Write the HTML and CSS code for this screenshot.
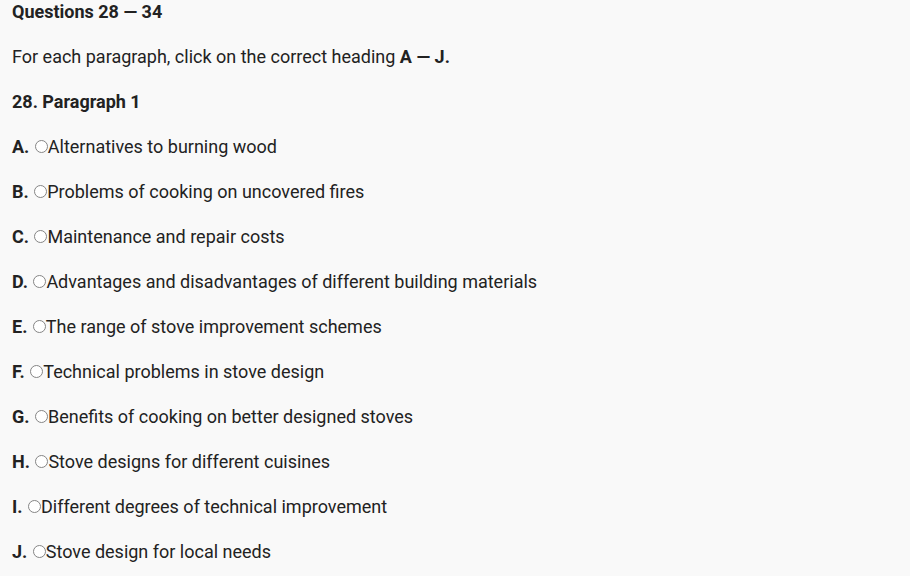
FILE: index.html
```html
<!DOCTYPE html>
<html>
<head>
<meta charset="utf-8">
<link rel="stylesheet" href="styles.css">
</head>
<body>
<div class="page">
  <p class="title">Questions 28 — 34</p>
  <p>For each paragraph, click on the correct heading <b>A — J.</b></p>
  <p class="title">28. Paragraph 1</p>
  <p class="opt"><b>A.</b> <span class="radio"></span>Alternatives to burning wood</p>
  <p class="opt"><b>B.</b> <span class="radio"></span>Problems of cooking on uncovered fires</p>
  <p class="opt"><b>C.</b> <span class="radio"></span>Maintenance and repair costs</p>
  <p class="opt"><b>D.</b> <span class="radio"></span>Advantages and disadvantages of different building materials</p>
  <p class="opt"><b>E.</b> <span class="radio"></span>The range of stove improvement schemes</p>
  <p class="opt"><b>F.</b> <span class="radio"></span>Technical problems in stove design</p>
  <p class="opt"><b>G.</b> <span class="radio"></span>Benefits of cooking on better designed stoves</p>
  <p class="opt"><b>H.</b> <span class="radio"></span>Stove designs for different cuisines</p>
  <p class="opt"><b>I.</b> <span class="radio"></span>Different degrees of technical improvement</p>
  <p class="opt"><b>J.</b> <span class="radio"></span>Stove design for local needs</p>
</div>
</body>
</html>
```
FILE: styles.css
```css
html, body {
  margin: 0;
  padding: 0;
  background: #f9f9f9;
}
.page {
  padding: 0 12px;
  font-family: Roboto, "Liberation Sans", sans-serif;
  font-size: 18px;
  line-height: 23px;
  color: #222;
}
.page p {
  margin: 0 0 22px 0;
}
.title {
  font-weight: bold;
}
b {
  font-weight: bold;
}
.radio {
  display: inline-block;
  box-sizing: border-box;
  width: 13px;
  height: 13px;
  border: 1px solid #858585;
  border-radius: 50%;
  margin: 0 0 0 1px;
  vertical-align: 0;
  background: #fff;
}
```
